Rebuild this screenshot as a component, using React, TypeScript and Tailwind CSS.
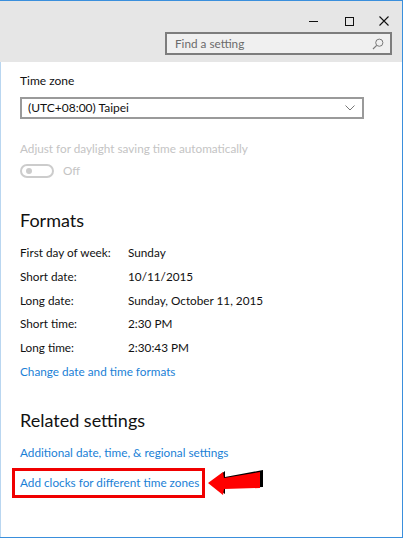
import React from 'react';

const font = { fontFamily: 'Lato, "Noto Sans", sans-serif' };

function TitleButtons() {
  return (
    <div className="flex h-[25px] items-end justify-end pr-[11px]">
      {/* minimize */}
      <div className="flex h-[10px] w-[14px] items-center justify-center">
        <div className="h-px w-[9px] bg-[#111]" />
      </div>
      {/* maximize */}
      <div className="ml-[22px] flex h-[10px] w-[14px] items-center justify-center">
        <div className="h-[9px] w-[9px] border border-[#111]" />
      </div>
      {/* close */}
      <svg className="ml-[21px]" width="14" height="10" viewBox="0 0 14 10">
        <path d="M2.5 0.5 L11.5 9.5 M11.5 0.5 L2.5 9.5" stroke="#111" strokeWidth="1.1" fill="none" />
      </svg>
    </div>
  );
}

function SearchBox() {
  return (
    <div className="ml-[165px] mt-[6px] flex h-[23px] w-[227px] items-center border-2 border-[#7d7d7d] bg-[#f0f0f0] pl-[8px] pr-[6px]">
      <span className="flex-1 text-[11.75px] leading-[18px] text-[#6b6b6b]">Find a setting</span>
      <svg width="12" height="12" viewBox="0 0 12 12">
        <circle cx="7.3" cy="4.7" r="3.6" stroke="#7a7a7a" strokeWidth="1" fill="none" />
        <path d="M4.7 7.3 L1 11" stroke="#7a7a7a" strokeWidth="1.2" />
      </svg>
    </div>
  );
}

function Row({ label, value }: { label: string; value: string }) {
  return (
    <div className="flex h-[23.75px] items-center text-[11.75px] text-[#111]">
      <span className="w-[108px]">{label}</span>
      <span>{value}</span>
    </div>
  );
}

function Arrow() {
  return (
    <svg className="ml-[2px]" width="58" height="30" viewBox="0 0 58 30">
      <polygon points="3,15 18,3 18,9 56,2 56,19 18,20 18,26" fill="#000" />
      <polygon points="1,15 16,4 17,10 53,4 53,20 17,21 16,27" fill="#ff0000" />
    </svg>
  );
}

export default function App() {
  return (
    <div className="h-[539px] w-[404px] bg-white" style={font}>
      <div className="flex h-[538px] w-[403px] flex-col border-t border-r border-b border-[#3a8fdc]">
        <div className="h-[61px] bg-[#e6e6e6]">
          <TitleButtons />
          <SearchBox />
        </div>

        <div className="flex flex-1 flex-col border-l border-[#b9d6f0] pl-[19px]">
          <div className="mt-[10px] text-[12px] leading-[18px] text-[#111]">Time zone</div>
          <div className="mt-[7px] flex h-[22px] w-[344px] items-center border-2 border-[#9a9a9a] pl-[6px] pr-[7px]">
            <span className="flex-1 text-[12px] leading-[18px] text-[#111]">(UTC+08:00) Taipei</span>
            <svg width="10" height="6" viewBox="0 0 10 6">
              <path d="M0.5 0.5 L5 5 L9.5 0.5" stroke="#777" strokeWidth="1" fill="none" />
            </svg>
          </div>

          <div className="mt-[21px] text-[11.75px] leading-[18px] text-[#c4c4c4]">
            Adjust for daylight saving time automatically
          </div>
          <div className="mt-[6px] flex h-[14px] items-center">
            <div className="flex h-[14px] w-[34px] items-center rounded-full border-2 border-[#cccccc] pl-[4px]">
              <div className="h-[6px] w-[6px] rounded-full bg-[#cccccc]" />
            </div>
            <span className="ml-[9px] text-[11.75px] leading-[18px] text-[#c4c4c4]">Off</span>
          </div>

          <div className="mt-[28px] text-[18px] leading-[28px] text-[#111]">Formats</div>
          <div className="mt-[7px] flex flex-col">
            <Row label="First day of week:" value="Sunday" />
            <Row label="Short date:" value="10/11/2015" />
            <Row label="Long date:" value="Sunday, October 11, 2015" />
            <Row label="Short time:" value="2:30 PM" />
            <Row label="Long time:" value="2:30:43 PM" />
            <div className="flex h-[23.75px] items-center text-[11.75px] text-[#1a7fd6]">
              Change date and time formats
            </div>
          </div>

          <div className="mt-[22px] text-[18px] leading-[28px] text-[#111]">Related settings</div>
          <div className="mt-[10px] text-[11.75px] leading-[18px] text-[#1a7fd6]">
            Additional date, time, &amp; regional settings
          </div>
          <div className="-ml-[8px] mt-[6px] flex items-center">
            <div className="flex h-[30px] w-[193px] items-center border-[3px] border-[#f00000] pl-[5px]">
              <span className="whitespace-nowrap pt-[1px] text-[11.75px] leading-[18px] text-[#1a7fd6]">Add clocks for different time zones</span>
            </div>
            <Arrow />
          </div>
        </div>
      </div>
    </div>
  );
}
